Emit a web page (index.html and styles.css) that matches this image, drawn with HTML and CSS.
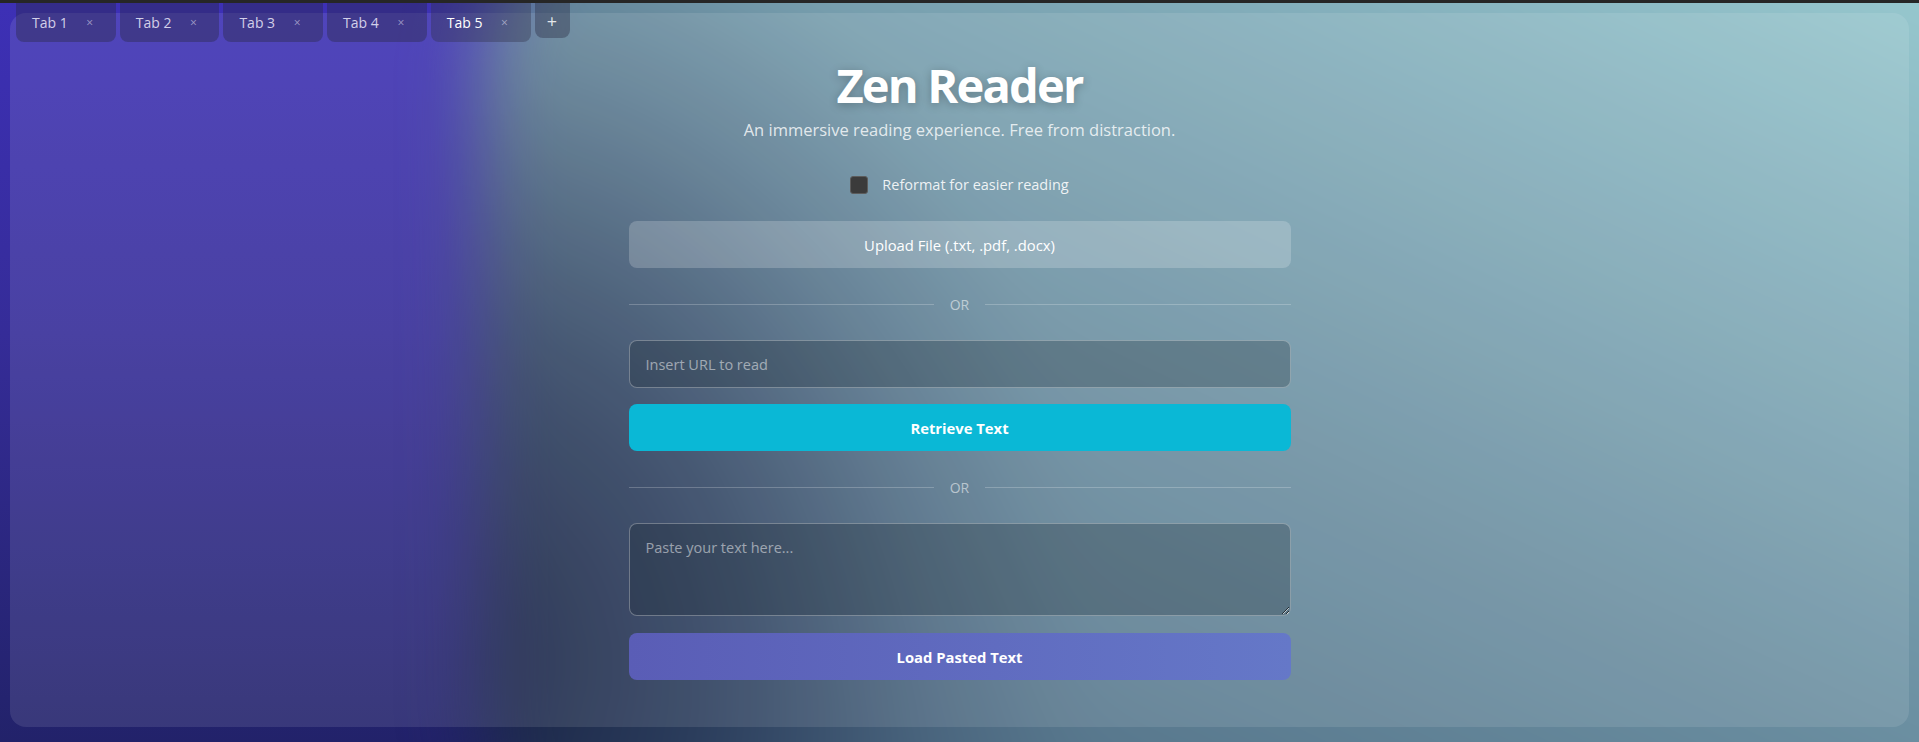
FILE: index.html
```html
<!DOCTYPE html>
<html lang="en">
<head>
<meta charset="utf-8">
<title>Zen Reader</title>
<link rel="stylesheet" href="styles.css">
</head>
<body>
<div class="backdrop"><div class="blob"></div></div>
<div class="page">
  <div class="topbar"></div>
  <nav class="tabs">
    <div class="tab"><span class="tab-label">Tab 1</span><span class="tab-close">×</span></div>
    <div class="tab"><span class="tab-label">Tab 2</span><span class="tab-close">×</span></div>
    <div class="tab"><span class="tab-label">Tab 3</span><span class="tab-close">×</span></div>
    <div class="tab"><span class="tab-label">Tab 4</span><span class="tab-close">×</span></div>
    <div class="tab active"><span class="tab-label">Tab 5</span><span class="tab-close">×</span></div>
    <div class="tab-add">+</div>
  </nav>
  <main class="card">
    <h1 class="title">Zen Reader</h1>
    <p class="subtitle">An immersive reading experience. Free from distraction.</p>
    <label class="reformat"><input type="checkbox" class="check"><span>Reformat for easier reading</span></label>
    <div class="form">
      <button class="btn upload">Upload File (.txt, .pdf, .docx)</button>
      <div class="divider"><span>OR</span></div>
      <input class="field" type="text" placeholder="Insert URL to read">
      <button class="btn retrieve">Retrieve Text</button>
      <div class="divider"><span>OR</span></div>
      <textarea class="field area" placeholder="Paste your text here..."></textarea>
      <button class="btn load">Load Pasted Text</button>
    </div>
  </main>
</div>
</body>
</html>
```
FILE: styles.css
```css
* { box-sizing: border-box; }
html, body { margin: 0; padding: 0; }
body {
  height: 742px;
  overflow: hidden;
  position: relative;
  font-family: "Open Sans", "Noto Sans", sans-serif;
  color: #fff;
  background: linear-gradient(180deg, #3d30b6 0%, #352c98 45%, #22226a 100%);
}
.backdrop {
  position: absolute;
  inset: 0;
  overflow: hidden;
  z-index: 0;
}
.blob {
  position: absolute;
  left: 480px;
  top: -120px;
  right: -200px;
  bottom: -160px;
  border-radius: 200px 0 0 200px;
  background:
    radial-gradient(ellipse 600px 780px at 0% 76%, rgba(24,34,68,1) 0%, rgba(30,44,78,0.72) 40%, rgba(40,56,90,0.25) 75%, rgba(40,56,90,0) 100%),
    linear-gradient(205deg, #a4d8da 0%, #86b2be 26%, #6c90a2 52%, #547389 80%, #4a677f 100%);
  filter: blur(36px);
}
.page {
  position: relative;
  z-index: 1;
  height: 742px;
  display: flex;
  flex-direction: column;
}
.topbar {
  height: 3px;
  background: #262626;
  flex: none;
}
.tabs {
  position: absolute;
  top: 3px;
  left: 16px;
  display: flex;
  gap: 4px;
  align-items: flex-start;
  z-index: 2;
}
.tab {
  height: 39px;
  display: flex;
  align-items: center;
  padding: 0 21px 0 16px;
  background: rgba(40, 40, 64, 0.38);
  border-radius: 0 0 8px 8px;
  font-size: 14px;
  color: rgba(238, 236, 252, 0.85);
}
.tab.active { color: #fff; background: rgba(48, 48, 70, 0.36); }
.tab-close {
  margin-left: 17px;
  width: 10px;
  text-align: center;
  font-size: 12px;
  color: rgba(220, 220, 235, 0.6);
}
.tab-add {
  width: 35px;
  height: 35px;
  display: flex;
  align-items: center;
  justify-content: center;
  background: rgba(40, 40, 64, 0.38);
  border-radius: 0 0 8px 8px;
  font-size: 18px;
  color: rgba(255,255,255,0.85);
}
.card {
  flex: 1;
  margin: 10px 10px 15px;
  border-radius: 16px;
  background: rgba(255, 255, 255, 0.1);
  display: flex;
  flex-direction: column;
  align-items: center;
  padding: 44px 0 0;
}
.title {
  margin: 0;
  font-size: 47px;
  line-height: 56px;
  font-weight: 700;
  letter-spacing: -1.8px;
  text-shadow: 0 2px 10px rgba(0,0,0,0.25);
}
.subtitle {
  margin: 4px 0 0;
  font-size: 16.5px;
  line-height: 25px;
  color: rgba(255,255,255,0.8);
}
.reformat {
  margin-top: 31px;
  display: flex;
  align-items: center;
  gap: 14px;
  font-size: 14.5px;
  line-height: 24px;
  color: rgba(255,255,255,0.88);
}
.check {
  appearance: none;
  -webkit-appearance: none;
  margin: 0;
  width: 18px;
  height: 18px;
  background: #3b3b3b;
  border: 1px solid #5c5c5c;
  border-radius: 3px;
}
.form {
  width: 662px;
  margin-top: 24px;
  display: flex;
  flex-direction: column;
}
.btn {
  height: 47px;
  border: none;
  border-radius: 8px;
  font-family: inherit;
  font-size: 14.8px;
  color: #fff;
  cursor: pointer;
}
.upload { background: rgba(255,255,255,0.2); }
.retrieve {
  margin-top: 16px;
  background: #0ab8d6;
  font-weight: 700;
}
.load {
  margin-top: 17px;
  background: linear-gradient(90deg, #5a5db6 0%, #6578c8 100%);
  font-weight: 700;
}
.divider {
  height: 20px;
  margin: 26px 0;
  display: flex;
  align-items: center;
  gap: 16px;
  font-size: 14px;
  color: rgba(255,255,255,0.55);
}
.divider::before, .divider::after {
  content: "";
  flex: 1;
  height: 1px;
  background: rgba(255,255,255,0.22);
}
.field {
  height: 48px;
  padding: 0 16px;
  border: 1px solid rgba(255,255,255,0.3);
  border-radius: 8px;
  background: rgba(20, 30, 40, 0.25);
  font-family: inherit;
  font-size: 14.5px;
  color: #fff;
  outline: none;
}
.field::placeholder { color: rgba(255,255,255,0.5); }
.area {
  height: 93px;
  padding: 13px 16px;
  resize: vertical;
  line-height: 1.5;
}
```
